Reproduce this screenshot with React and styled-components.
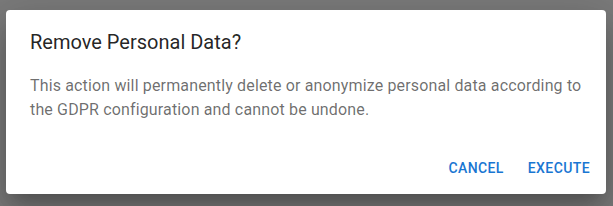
import React from "react";
import styled, { createGlobalStyle } from "styled-components";

const GlobalStyle = createGlobalStyle`
  html, body {
    margin: 0;
    padding: 0;
    background: #7b7b7b;
  }
  body {
    font-family: Roboto, "Liberation Sans", sans-serif;
  }
`;

function App() {
  return (
    <>
      <GlobalStyle />
      <Backdrop>
        <Dialog role="dialog">
          <Title>Remove Personal Data?</Title>
          <Content>
            <ContentText>
              This action will permanently delete or anonymize personal data
              according to the GDPR configuration and cannot be undone.
            </ContentText>
          </Content>
          <Actions>
            <TextButton>Cancel</TextButton>
            <TextButton>Execute</TextButton>
          </Actions>
        </Dialog>
      </Backdrop>
    </>
  );
}
export default App;

const Backdrop = styled.div`
  width: 613px;
  height: 206px;
  box-sizing: border-box;
  padding: 10px 7px 12px 6px;
  display: flex;
  align-items: flex-start;
  background: #7b7b7b;
`;

const Dialog = styled.div`
  width: 600px;
  display: flex;
  flex-direction: column;
  background: #ffffff;
  border-radius: 4px;
  box-shadow: 0px 11px 15px -7px rgba(0, 0, 0, 0.2),
    0px 24px 38px 3px rgba(0, 0, 0, 0.14), 0px 9px 46px 8px rgba(0, 0, 0, 0.12);
`;

const Title = styled.h2`
  margin: 0;
  padding: 16px 24px;
  font-size: 20px;
  font-weight: 400;
  line-height: 32px;
  color: rgba(0, 0, 0, 0.87);
`;

const Content = styled.div`
  padding: 0 24px 20px;
`;

const ContentText = styled.p`
  margin: 0;
  font-size: 16px;
  line-height: 24px;
  letter-spacing: 0.00938em;
  color: rgba(0, 0, 0, 0.58);
`;

const Actions = styled.div`
  display: flex;
  justify-content: flex-end;
  align-items: center;
  gap: 8px;
  padding: 8px;
`;

const TextButton = styled.button`
  min-width: 64px;
  height: 36px;
  padding: 6px 8px;
  border: 0;
  border-radius: 4px;
  background: transparent;
  font-family: Roboto, "Liberation Sans", sans-serif;
  font-size: 14px;
  font-weight: 500;
  line-height: 24px;
  letter-spacing: 0.02857em;
  text-transform: uppercase;
  color: #1976d2;
  cursor: pointer;
`;
